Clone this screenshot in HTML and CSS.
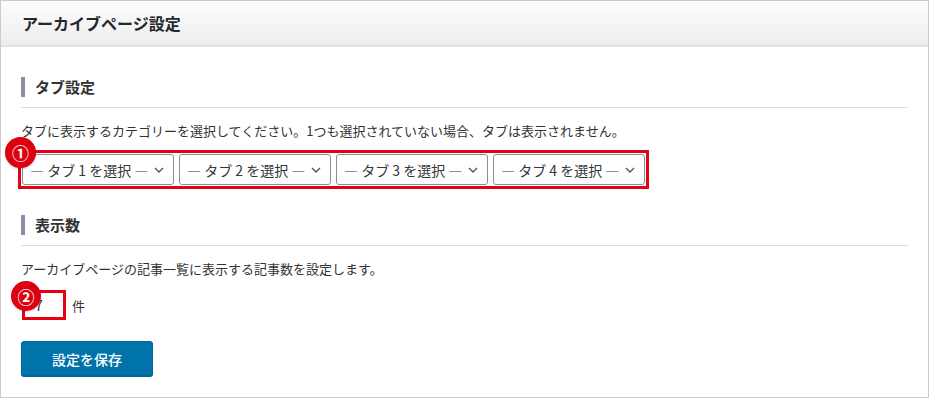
FILE: index.html
```html
<!DOCTYPE html>
<html lang="ja">
<head>
  <meta charset="UTF-8">
  <meta name="viewport" content="width=device-width, initial-scale=1.0">
  <title>アーカイブページ設定</title>
  <link rel="stylesheet" href="styles.css">
</head>
<body>
  <div class="panel">
    <div class="panel-head">アーカイブページ設定</div>
    <div class="panel-body">
      <h2><span>タブ設定</span></h2>
      <p>タブに表示するカテゴリーを選択してください。1つも選択されていない場合、タブは表示されません。</p>
      <div class="tabs mark">
        <span class="badge">①</span>
        <label class="select"><select><option>— タブ 1 を選択 —</option></select><svg viewBox="0 0 10 6"><path d="M1 1L5 5L9 1"/></svg></label>
        <label class="select"><select><option>— タブ 2 を選択 —</option></select><svg viewBox="0 0 10 6"><path d="M1 1L5 5L9 1"/></svg></label>
        <label class="select"><select><option>— タブ 3 を選択 —</option></select><svg viewBox="0 0 10 6"><path d="M1 1L5 5L9 1"/></svg></label>
        <label class="select"><select><option>— タブ 4 を選択 —</option></select><svg viewBox="0 0 10 6"><path d="M1 1L5 5L9 1"/></svg></label>
      </div>

      <h2><span>表示数</span></h2>
      <p>アーカイブページの記事一覧に表示する記事数を設定します。</p>
      <div class="count">
        <span class="num mark"><span class="badge">②</span><input type="text" value="7"></span>
        <span>件</span>
      </div>

      <button class="save">設定を保存</button>
    </div>
  </div>
</body>
</html>
```

FILE: styles.css
```css
body { margin: 0; font-family: "Noto Sans CJK JP", "Noto Sans", sans-serif; color: #333; background: #fff; }
.panel { height: 398px; box-sizing: border-box; border: 1px solid #ccc; }
.panel-head { height: 44px; display: flex; align-items: center; padding-left: 21px; font-size: 16px; font-weight: bold; color: #23282d; background: linear-gradient(#fdfdfd, #ededed); border-bottom: 2px solid #e3e3e3; }
.panel-body { padding: 0 20px; }

h2 { margin: 30px 0 0; padding-bottom: 10px; border-bottom: 1px solid #ddd; font-size: 15px; }
h2 span { display: block; line-height: 20px; border-left: 4px solid #8a8fa6; padding-left: 10px; color: #333; }
p { margin: 13px 0 0; font-size: 13px; line-height: 20px; color: #333; }

.mark { position: relative; outline: 3px solid #e50012; }
.badge { position: absolute; width: 31px; height: 31px; border-radius: 50%; background: #dc0010; color: #fff; font-size: 17px; font-weight: bold; display: flex; align-items: center; justify-content: center; box-shadow: 0 1px 2px #0003; z-index: 2; }

.tabs { display: flex; gap: 5px; width: max-content; margin: 13px 0 0 1px; outline-offset: 1px; }
.tabs .badge { left: -17px; top: -17px; }
.select { position: relative; display: block; }
.select select { appearance: none; width: 152px; height: 31px; padding: 0 24px 0 7px; border: 1px solid #8c8f94; border-radius: 3px; background: #fff; font-family: inherit; font-size: 14px; color: #32373c; }
.select svg { position: absolute; right: 10px; top: 13px; width: 10px; height: 6px; fill: none; stroke: #50575e; stroke-width: 1.4; }

.count { display: flex; align-items: center; gap: 9px; margin-top: 14px; font-size: 13px; color: #333; }
.num { display: block; margin-left: 4px; }
.num input { display: block; width: 38px; height: 24px; box-sizing: border-box; padding: 0 0 0 10px; border: 0; font-family: inherit; font-size: 14px; color: #32373c; }
.num .badge { left: -14px; top: -12px; width: 30px; height: 30px; }

.save { display: block; margin-top: 24px; width: 132px; height: 35px; border: 1px solid #006799; border-radius: 3px; background: #0073aa; box-shadow: 0 1px 0 #006799; color: #fff; font-family: inherit; font-size: 14px; font-weight: 500; }
```
